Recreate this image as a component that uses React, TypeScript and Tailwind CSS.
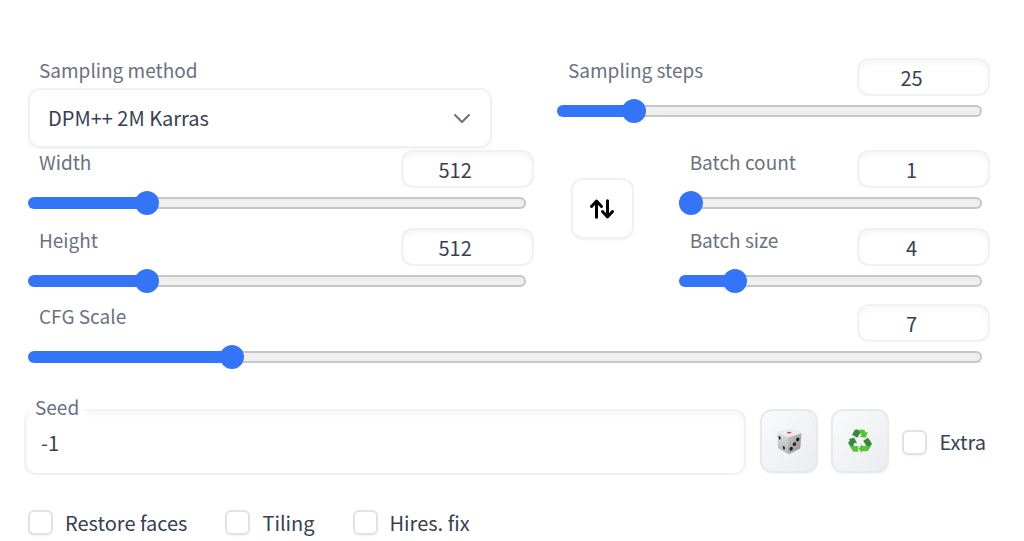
import { useState } from "react";
import type { CSSProperties } from "react";

type SliderProps = {
  id: string;
  label: string;
  min: number;
  max: number;
  initial: number;
};

function SliderField({ id, label, min, max, initial }: SliderProps) {
  const [value, setValue] = useState(initial);
  const ratio = (value - min) / (max - min);
  // The fill ends under the middle of the 24px thumb
  const fill = { "--fill": `calc(12px + (100% - 24px) * ${ratio})` } as CSSProperties;

  return (
    <div>
      <div className="flex items-start justify-between">
        <label htmlFor={id} className="pl-[11px] text-[19px] leading-6 text-gray-500">
          {label}
        </label>
        <input
          type="number"
          aria-label={`${label} value`}
          min={min}
          max={max}
          value={value}
          onChange={(e) => setValue(Number(e.target.value))}
          className="h-[38px] w-[133px] shrink-0 appearance-none rounded-xl border-2 border-gray-200/60 bg-white pr-6 text-center text-gray-700 shadow-[inset_0_3px_6px_rgba(0,0,0,0.04)] outline-none [appearance:textfield] [&::-webkit-inner-spin-button]:appearance-none"
        />
      </div>
      <div className="flex pt-[9px] pr-2">
        <input
          id={id}
          type="range"
          min={min}
          max={max}
          value={value}
          onChange={(e) => setValue(Number(e.target.value))}
          style={fill}
          className="h-3 w-full appearance-none rounded-full border-2 border-transparent [background:linear-gradient(to_right,#3375f6_var(--fill),transparent_var(--fill))_border-box,linear-gradient(#efefef,#efefef)_padding-box,linear-gradient(#c6c6c6,#c6c6c6)_border-box] [&::-webkit-slider-runnable-track]:-mx-0.5 [&::-webkit-slider-thumb]:h-6 [&::-webkit-slider-thumb]:w-6 [&::-webkit-slider-thumb]:appearance-none [&::-webkit-slider-thumb]:rounded-full [&::-webkit-slider-thumb]:bg-[#3375f6]"
        />
      </div>
    </div>
  );
}

function Checkbox({ label }: { label: string }) {
  return (
    <label className="flex items-center gap-3 leading-6 whitespace-nowrap text-gray-700">
      <input
        type="checkbox"
        className="h-[25px] w-[25px] appearance-none rounded-md border-2 border-gray-300/70 bg-white shadow-xs checked:border-[#3375f6] checked:bg-[#3375f6]"
      />
      {label}
    </label>
  );
}

function SwapIcon() {
  return (
    <svg
      viewBox="0 0 24 20"
      className="h-5 w-6"
      fill="none"
      stroke="black"
      strokeWidth="3"
      strokeLinecap="round"
      strokeLinejoin="round"
    >
      <path d="M6.5 18.2V2.2M1.5 7.4 6.5 2l5 5.4" />
      <path d="M17.5 1.8v16M12.5 12.6l5 5.4 5-5.4" />
    </svg>
  );
}

function DiceIcon() {
  return (
    <svg viewBox="0 0 74 76" className="h-[25px] w-[25px]">
      <defs>
        <linearGradient id="dice-left" x1="0" y1="0" x2="0" y2="1">
          <stop offset="0" stopColor="#dcdcdc" />
          <stop offset="1" stopColor="#b4b4b4" />
        </linearGradient>
        <linearGradient id="dice-right" x1="0" y1="0" x2="1" y2="1">
          <stop offset="0" stopColor="#c6c6c6" />
          <stop offset="1" stopColor="#8f8f8f" />
        </linearGradient>
      </defs>
      <path d="M1 15Q0 11 5 9L31 1Q36 0 41 1L69 9Q74 11 73 16L70 55Q69 59 66 61L38 75Q34 77 30 74L5 60Q2 58 2 54Z" fill="#d6d6d6" />
      <path d="M1 14 32 25Q34 50 32 75L5 60Q2 58 2 54Z" fill="url(#dice-left)" />
      <path d="M32 25 73 14 70 55Q69 59 66 61L38 75Q35 76 32 75Z" fill="url(#dice-right)" />
      <path d="M2 13Q2 10 6 9L31 1Q36 0 41 1L69 9Q72 10 72 13L36 24Q33 25 30 24Z" fill="#ececec" />
      <ellipse cx="36" cy="11" rx="7" ry="3" fill="#e8453c" />
      <g fill="#222">
        <ellipse cx="7" cy="27" rx="3" ry="5.5" transform="rotate(-12 7 27)" />
        <ellipse cx="20" cy="57" rx="3" ry="5.5" transform="rotate(-12 20 57)" />
        <ellipse cx="62" cy="32" rx="5" ry="6" transform="rotate(30 62 32)" />
        <ellipse cx="52" cy="46" rx="5" ry="6" transform="rotate(30 52 46)" />
        <ellipse cx="42" cy="60" rx="5" ry="6" transform="rotate(30 42 60)" />
      </g>
    </svg>
  );
}

function RecycleIcon() {
  return (
    <svg viewBox="0 0 72 70" className="h-6 w-6">
      <g fill="#56c438">
        <path d="M22 1H45Q49 1 51 5L54 10 60 7 53 25 34 22 41 18 33 6Z" />
        <path d="M70 40 60 27 46 35 57 50Q60 55 56 61L53 66H56Q60 66 62 62L70 47Q72 43 70 40ZM56 50H42V45L31 58 42 70V66H54L61 52Z" />
        <path d="M0 41 14 65Q16 67 19 67H30V50H18L10 36Z" />
      </g>
      <g fill="#35883c">
        <path d="M22 1Q28 0 32 4L37 10 28 25 12 16 19 4Q20 1 22 1Z" />
        <path d="M60 25 71 43Q69 51 60 51H56L46 34Z" />
        <path d="M2 29 19 25 27 42 20 40 14 51Q8 51 5 46L1 40 6 32Z" />
      </g>
    </svg>
  );
}

const toolButton =
  "flex h-16 w-[58px] shrink-0 items-center justify-center rounded-xl border-2 border-gray-200/80 bg-linear-to-br from-gray-50 to-gray-200/80 shadow-xs";

export default function App() {
  return (
    <main className="bg-white pt-[58px] pr-[34px] pb-1 pl-6 font-['Noto_Sans_CJK_SC',sans-serif] text-[20px]">
      <div className="flex gap-[65px] pl-1">
        <div className="flex-[464]">
          <label
            htmlFor="sampler"
            className="block h-[30px] pl-[11px] text-[19px] leading-6 text-gray-500"
          >
            Sampling method
          </label>
          <div className="relative">
            <select
              id="sampler"
              className="h-[60px] w-full appearance-none rounded-xl border-2 border-gray-200/60 bg-white px-[18px] text-gray-700 shadow-xs outline-none"
            >
              <option>DPM++ 2M Karras</option>
              <option>Euler a</option>
              <option>DDIM</option>
            </select>
            <svg
              viewBox="0 0 16 9"
              className="pointer-events-none absolute top-[26px] right-[22px] h-[9px] w-4"
              fill="none"
              stroke="#6b7280"
              strokeWidth="2"
              strokeLinecap="round"
              strokeLinejoin="round"
            >
              <path d="M1 1l7 7 7-7" />
            </svg>
          </div>
        </div>
        <div className="flex-[433]">
          <SliderField id="steps" label="Sampling steps" min={1} max={150} initial={25} />
        </div>
      </div>

      <div className="flex items-center pt-0.5 pl-1">
        <div className="flex flex-[505] flex-col gap-[19px]">
          <SliderField id="width" label="Width" min={64} max={2048} initial={512} />
          <SliderField id="height" label="Height" min={64} max={2048} initial={512} />
        </div>
        <button
          type="button"
          aria-label="Switch width and height"
          className="mr-[45px] mb-5 ml-[37px] flex h-[61px] w-[63px] shrink-0 items-center justify-center rounded-xl border-2 border-gray-200/60 bg-white shadow-xs"
        >
          <SwapIcon />
        </button>
        <div className="flex flex-[311] flex-col gap-[19px]">
          <SliderField id="batch-count" label="Batch count" min={1} max={100} initial={1} />
          <SliderField id="batch-size" label="Batch size" min={1} max={20} initial={4} />
        </div>
      </div>

      <div className="pt-[17px] pl-1">
        <SliderField id="cfg" label="CFG Scale" min={1} max={30} initial={7} />
      </div>

      <div className="flex items-start pt-[46px]">
        <div className="relative mr-[14px] flex-1">
          <input
            id="seed"
            type="text"
            defaultValue="-1"
            className="block h-[66px] w-full rounded-xl border-2 border-gray-200/60 bg-white px-[15px] text-gray-700 shadow-[inset_0_3px_6px_rgba(0,0,0,0.04)] outline-none"
          />
          <label
            htmlFor="seed"
            className="absolute -top-[14px] left-2 bg-white px-[3px] text-[19px] leading-6 text-gray-500 shadow-[0_0_6px_4px_white]"
          >
            Seed
          </label>
        </div>
        <button type="button" aria-label="Random seed" className={toolButton}>
          <DiceIcon />
        </button>
        <button type="button" aria-label="Reuse last seed" className={`ml-[13px] ${toolButton}`}>
          <RecycleIcon />
        </button>
        <div className="mr-1 ml-[13px] flex h-[66px] items-center">
          <Checkbox label="Extra" />
        </div>
      </div>

      <div className="flex gap-[38px] pt-[35px] pl-1">
        <Checkbox label="Restore faces" />
        <Checkbox label="Tiling" />
        <Checkbox label="Hires. fix" />
      </div>
    </main>
  );
}
